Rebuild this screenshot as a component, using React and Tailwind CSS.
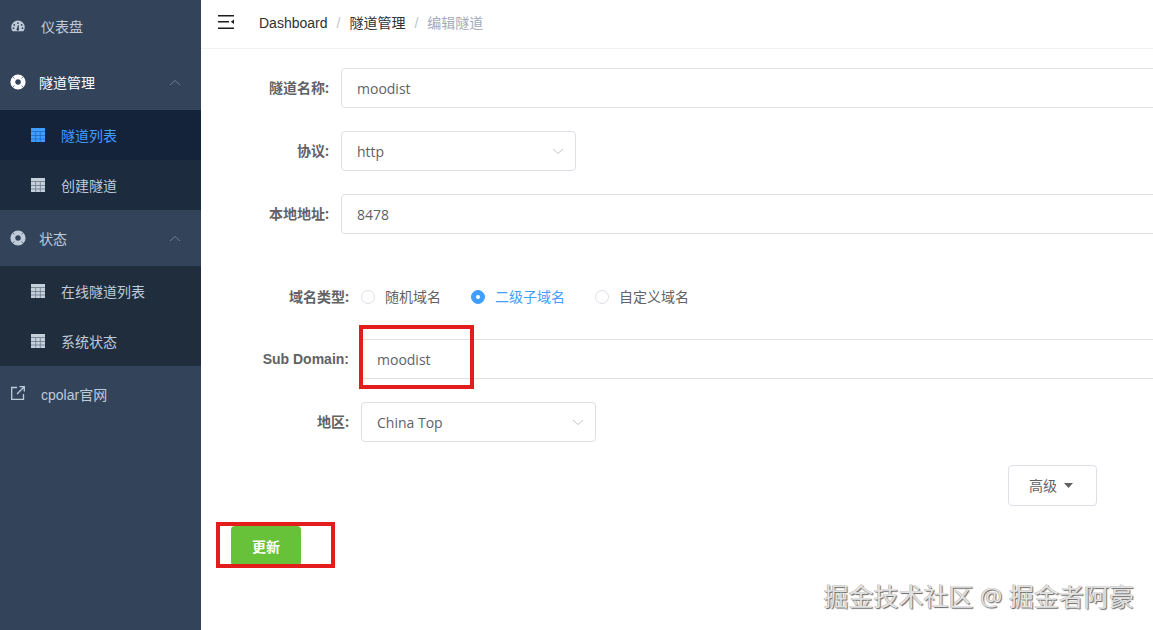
const FONT = "font-['Open_Sans','Noto_Sans_CJK_SC',sans-serif]";

function GridIcon({ active }) {
  const c = active ? "#409eff" : "#c6d0db";
  return (
    <svg width="14" height="14" viewBox="0 0 14 14" className="shrink-0">
      <rect x="0" y="0" width="14" height="14" fill={c} />
      <path d="M0 3.500H14M0 7.500H14M0 11H14M4.700 3.500V14M9.300 3.500V14" stroke={active ? "#1d6cc0" : "#68778a"} strokeWidth="0.8" fill="none" />
    </svg>
  );
}

function RingIcon({ color }) {
  return (
    <svg width="16" height="16" viewBox="0 0 16 16" className="shrink-0">
      <circle cx="8" cy="8" r="5.200" fill="none" stroke={color} strokeWidth="4.800" />
      <path d="M2.300 2.300L4.500 4.500M11.500 4.500L13.700 2.300M2.300 13.700L4.500 11.500M11.500 11.500L13.700 13.700" stroke="#33435a" strokeWidth="0.7" />
    </svg>
  );
}

function Gauge() {
  return (
    <svg width="14" height="12" viewBox="0 0 14 12" className="shrink-0">
      <path fillRule="evenodd" fill="#bfcbd9" d="M7 0.5a6.700 6.700 0 0 1 6.700 6.700c0 1.600-.5 3-1.400 4H1.700C.8 10.200.3 8.800.3 7.200A6.700 6.700 0 0 1 7 .5ZM7 2.200a.9.900 0 1 0 0 1.800.9.900 0 0 0 0-1.800ZM3.300 4a.9.900 0 1 0 0 1.800.9.900 0 0 0 0-1.800ZM10.700 4a.9.900 0 1 0 0 1.800.9.900 0 0 0 0-1.800ZM2.500 7.300a.9.900 0 1 0 0 1.800.9.900 0 0 0 0-1.800ZM11.500 7.300a.9.900 0 1 0 0 1.800.9.900 0 0 0 0-1.800ZM6.900 5.200 6 8.300a1.300 1.300 0 1 0 1.800.3l.1-3.300Z" />
    </svg>
  );
}

function Chevron({ up, className }) {
  return (
    <svg width="12" height="7" viewBox="0 0 12 7" className={className}>
      <path d={up ? "M1 6L6 1.500L11 6" : "M1 1L6 5.500L11 1"} fill="none" stroke={up ? "#6f7d90" : "#c0c4cc"} strokeWidth="1" />
    </svg>
  );
}

function SubItem({ label, active, bg, height }) {
  return (
    <div className={`flex items-center pl-[31px] gap-[16px] ${height} ${bg}`}>
      <GridIcon active={active} />
      <span className={`text-[14px] ${active ? "text-[#409eff]" : "text-[#bfcbd9]"}`}>{label}</span>
    </div>
  );
}

function Sidebar() {
  return (
    <aside className="w-[201px] h-full shrink-0 bg-[#33435a]">
      <div className="h-[56px] flex items-center pl-[11px] gap-[16px] pb-[4px]">
        <Gauge />
        <span className="text-[14px] text-[#bfcbd9]">仪表盘</span>
      </div>
      <div className="h-[54px] flex items-center pl-[10px] pr-[20px] pb-[2px]">
        <RingIcon color="#ffffff" />
        <span className="ml-[13px] text-[14px] text-white">隧道管理</span>
        <Chevron up className="ml-auto" />
      </div>
      <SubItem label="隧道列表" active bg="bg-[#14233a]" height="h-[50px]" />
      <SubItem label="创建隧道" bg="bg-[#1c2b3e]" height="h-[50px]" />
      <div className="h-[56px] flex items-center pl-[10px] pr-[20px]">
        <RingIcon color="#bfcbd9" />
        <span className="ml-[13px] text-[14px] text-[#bfcbd9]">状态</span>
        <Chevron up className="ml-auto" />
      </div>
      <SubItem label="在线隧道列表" bg="bg-[#1f2d3d]" height="h-[50px]" />
      <SubItem label="系统状态" bg="bg-[#1f2d3d]" height="h-[50px]" />
      <div className="h-[56px] flex items-center pl-[11px] gap-[16px]">
        <svg width="14" height="14" viewBox="0 0 14 14" className="shrink-0 -mt-[2px]">
          <path d="M6 1.500H.7V13.300H12.500V8M8.500 .7H13.300V5.500M13.300 .7L6 8" fill="none" stroke="#bfcbd9" strokeWidth="1.300" />
        </svg>
        <span className="text-[14px] text-[#bfcbd9] mt-[2px] font-['Liberation_Sans','Noto_Sans_CJK_SC',sans-serif]">cpolar官网</span>
      </div>
    </aside>
  );
}

function Header() {
  return (
    <header className="h-[49px] shrink-0 border-b border-[#f0f2f4] flex items-center pl-[17px] pb-[1px]">
      <svg width="16" height="14" viewBox="0 0 16 14" className="shrink-0 -mt-[3px]">
        <path d="M0 .8H16M0 6.800H11M0 13.200H16" stroke="#1c1c1c" strokeWidth="1.600" />
        <path d="M16 4.500V9L12.800 6.800Z" fill="#1c1c1c" />
      </svg>
      <nav className="ml-[25px] flex items-center text-[14px] text-[#303133] font-['Liberation_Sans','Noto_Sans_CJK_SC',sans-serif]">
        <span>Dashboard</span>
        <span className="mx-[9px] text-[#c0c4cc]">/</span>
        <span>隧道管理</span>
        <span className="mx-[9px] text-[#c0c4cc]">/</span>
        <span className="text-[#a3abbb]">编辑隧道</span>
      </nav>
    </header>
  );
}

function Label({ children, width }) {
  return (
    <label className={`shrink-0 text-right text-[14px] leading-[20px] -mt-[1px] text-[#606266] font-bold ${width}`}>{children}</label>
  );
}

function Field({ value, select, width = "w-[900px]" }) {
  return (
    <div className={`h-[40px] shrink-0 rounded-[4px] border border-[#dcdfe6] bg-white flex items-center pl-[15px] pr-[11px] text-[14px] text-[#606266] ${width}`}>
      <span>{value}</span>
      {select && <Chevron className="ml-auto" />}
    </div>
  );
}

function Radio({ label, checked }) {
  return (
    <div className="flex items-center gap-[10px]">
      <span className={`w-[14px] h-[14px] rounded-full flex items-center justify-center border ${checked ? "bg-[#409eff] border-[#409eff]" : "bg-white border-[#dcdfe6]"}`}>
        {checked && <span className="w-[4px] h-[4px] rounded-full bg-white" />}
      </span>
      <span className={`text-[14px] leading-[20px] -mt-[1px] ${checked ? "text-[#409eff]" : "text-[#606266]"}`}>{label}</span>
    </div>
  );
}

function Form() {
  return (
    <div className="relative flex-1 overflow-hidden">
      <div className="pt-[19px] flex flex-col">
        <div className="flex items-center gap-[12px] pl-[28px]">
          <Label width="w-[100px]">隧道名称:</Label>
          <Field value="moodist" />
        </div>
        <div className="mt-[23px] flex items-center gap-[12px] pl-[28px]">
          <Label width="w-[100px]">协议:</Label>
          <Field value="http" select width="w-[235px]" />
        </div>
        <div className="mt-[23px] flex items-center gap-[12px] pl-[28px]">
          <Label width="w-[100px]">本地地址:</Label>
          <Field value="8478" />
        </div>
        <div className="mt-[53px] h-[20px] flex items-center gap-[12px] pl-[28px]">
          <Label width="w-[120px]">域名类型:</Label>
          <div className="flex items-center gap-[30px]">
            <Radio label="随机域名" />
            <Radio label="二级子域名" checked />
            <Radio label="自定义域名" />
          </div>
        </div>
        <div className="mt-[32px] flex items-center gap-[12px] pl-[28px]">
          <Label width="w-[120px]">
            <span className="font-['Liberation_Sans',sans-serif]">Sub Domain:</span>
          </Label>
          <Field value="moodist" />
        </div>
        <div className="mt-[23px] flex items-center gap-[12px] pl-[28px]">
          <Label width="w-[120px]">地区:</Label>
          <Field value="China Top" select width="w-[235px]" />
        </div>
        <div className="mt-[23px] flex justify-end pr-[56px]">
          <button className="w-[89px] h-[41px] rounded-[4px] border border-[#dcdfe6] bg-white flex items-center justify-center gap-[7px] pr-[3px] text-[14px] text-[#606266]">
            高级
            <svg width="9" height="5" viewBox="0 0 9 5"><path d="M0 0H9L4.500 5Z" fill="#606266" /></svg>
          </button>
        </div>
        <div className="mt-[20px] pl-[30px]">
          <button className="w-[70px] h-[40px] rounded-[4px] bg-[#67c23a] text-white text-[14px] font-bold">更新</button>
        </div>
      </div>

      <div className="absolute left-[158px] top-[276px] w-[115px] h-[64px] border-[4px] border-[#e31c1c]" />
      <div className="absolute left-[15px] top-[473px] w-[119px] h-[46px] border-[4px] border-[#e31c1c]" />
      <div className="absolute right-[19px] bottom-[16px] text-[25px] leading-[36px] text-[#e2e2e2] [text-shadow:1px_1px_1px_#666,-0.5px_0_0_#aaa] whitespace-nowrap">
        掘金技术社区 @ 掘金者阿豪
      </div>
    </div>
  );
}

export default function App() {
  return (
    <div className={`w-[1153px] h-[630px] flex overflow-hidden bg-white ${FONT}`}>
      <Sidebar />
      <main className="flex-1 min-w-0 flex flex-col">
        <Header />
        <Form />
      </main>
    </div>
  );
}
